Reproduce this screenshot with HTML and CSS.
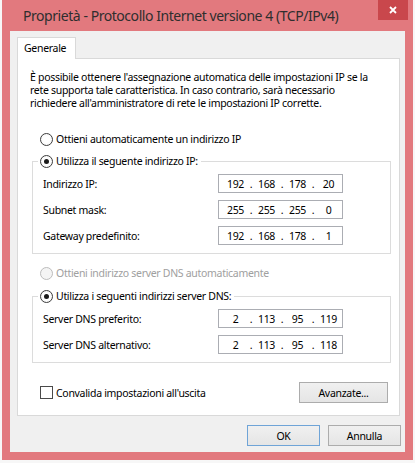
FILE: index.html
```html
<!DOCTYPE html>
<html lang="it">
<head>
  <meta charset="UTF-8" />
  <title>Proprietà - Protocollo Internet versione 4 (TCP/IPv4)</title>
  <link rel="stylesheet" href="styles.css">
</head>
<body>

  <!-- Dialog window with pink Windows 8 frame -->
  <div class="window">
    <div class="titlebar">
      <span class="title">Proprietà - Protocollo Internet versione 4 (TCP/IPv4)</span>
      <button class="close" aria-label="Chiudi">
        <svg width="8" height="8" viewBox="0 0 8 8">
          <path d="M1 1 L7 7 M7 1 L1 7" stroke="#fff" stroke-width="1.8" fill="none"/>
        </svg>
      </button>
    </div>

    <div class="client">
      <div class="tabs">
        <div class="tab">Generale</div>
      </div>

      <div class="panel">
        <p class="intro">
          È possibile ottenere l'assegnazione automatica delle impostazioni IP se la<br>
          rete supporta tale caratteristica. In caso contrario, sarà necessario<br>
          richiedere all'amministratore di rete le impostazioni IP corrette.
        </p>

        <label class="option first">
          <span class="radio"></span>Ottieni automaticamente un indirizzo IP
        </label>

        <fieldset class="group">
          <legend><label class="option"><span class="radio checked"></span>Utilizza il seguente indirizzo IP:</label></legend>
          <div class="field">
            <span>Indirizzo IP:</span>
            <div class="ip"><span>192</span><i>.</i><span>168</span><i>.</i><span>178</span><i>.</i><span>20</span></div>
          </div>
          <div class="field">
            <span>Subnet mask:</span>
            <div class="ip"><span>255</span><i>.</i><span>255</span><i>.</i><span>255</span><i>.</i><span>0</span></div>
          </div>
          <div class="field">
            <span>Gateway predefinito:</span>
            <div class="ip"><span>192</span><i>.</i><span>168</span><i>.</i><span>178</span><i>.</i><span>1</span></div>
          </div>
        </fieldset>

        <label class="option disabled dns-auto">
          <span class="radio"></span>Ottieni indirizzo server DNS automaticamente
        </label>

        <fieldset class="group dns">
          <legend><label class="option"><span class="radio checked"></span>Utilizza i seguenti indirizzi server DNS:</label></legend>
          <div class="field">
            <span>Server DNS preferito:</span>
            <div class="ip"><span>2</span><i>.</i><span>113</span><i>.</i><span>95</span><i>.</i><span>119</span></div>
          </div>
          <div class="field">
            <span>Server DNS alternativo:</span>
            <div class="ip"><span>2</span><i>.</i><span>113</span><i>.</i><span>95</span><i>.</i><span>118</span></div>
          </div>
        </fieldset>

        <div class="panel-foot">
          <label class="option">
            <span class="check"></span>Convalida impostazioni all'uscita
          </label>
          <button class="btn advanced">Avanzate...</button>
        </div>
      </div>

      <div class="dialog-buttons">
        <button class="btn default">OK</button>
        <button class="btn">Annulla</button>
      </div>
    </div>
  </div>

</body>
</html>
```

FILE: styles.css
```css
/* Base */
* { box-sizing: border-box; }
body {
  margin: 0;
  background: #f7f7f7;
  font-family: "Noto Sans", sans-serif;
  font-size: 10.5px;
  letter-spacing: -0.3px;
  color: #000;
}

/* Window frame */
.window {
  margin-left: 2px;
  width: 411px;
  height: 460px;
  background: #e2797e;
  padding: 0 8px 8px 8px;
  display: flex;
  flex-direction: column;
}

.titlebar {
  height: 31px;
  display: flex;
  justify-content: space-between;
  align-items: flex-start;
}

.title {
  padding-left: 13px;
  line-height: 31px;
  font-size: 14px;
  letter-spacing: -0.45px;
  color: #2e2e2e;
  white-space: nowrap;
}

.close {
  width: 30px;
  height: 20px;
  margin-right: -3px;
  border: none;
  padding: 0;
  background: #c9474c;
  display: flex;
  align-items: center;
  justify-content: center;
}

/* Client area */
.client {
  flex: 1;
  background: #f0f0f0;
  padding: 6px 5px 0 7px;
}

.tabs {
  display: flex;
}

.tab {
  position: relative;
  z-index: 1;
  width: 59px;
  height: 22px;
  margin-bottom: -1px;
  padding-left: 6px;
  line-height: 21px;
  background: #fff;
  border: 1px solid #d9d9d9;
  border-bottom: none;
}

.panel {
  background: #fff;
  border: 1px solid #d9d9d9;
  padding: 12px 10px 12px 12px;
}

.intro {
  margin: 0;
  line-height: 13px;
  white-space: nowrap;
}

/* Radio and check options */
.option {
  display: flex;
  align-items: center;
  gap: 3px;
  height: 16px;
  white-space: nowrap;
}

.option.first {
  margin: 21px 0 0 10px;
}

.option.disabled {
  color: #a0a0a0;
}

.dns-auto {
  margin: 11px 0 0 10px;
}

.radio {
  width: 13px;
  height: 13px;
  border: 1px solid #3c3c3c;
  border-radius: 50%;
  background: radial-gradient(circle, #fff 40%, #f1f1f1 100%);
  display: flex;
  align-items: center;
  justify-content: center;
}

.radio.checked::after {
  content: "";
  width: 5px;
  height: 5px;
  border-radius: 50%;
  background: #1a1a1a;
}

.disabled .radio {
  border-color: #bcbcbc;
  background: #f4f4f4;
}

.check {
  width: 13px;
  height: 13px;
  border: 1px solid #4a4a4a;
  background: #fff;
}

/* Group boxes */
.group {
  margin: 6px -2px 0 2px;
  border: 1px solid #dcdcdc;
  padding: 5px 0 8px 10px;
  min-width: 0;
}

.group.dns {
  margin-top: 7px;
}

.group legend {
  margin-left: -5px;
  padding: 0 3px 0 2px;
}

.field {
  display: grid;
  grid-template-columns: 175px 125px;
  align-items: center;
  height: 19px;
  margin-bottom: 7px;
}

.field:last-child {
  margin-bottom: 0;
}

/* IP address boxes */
.ip {
  height: 19px;
  border: 1px solid #abadb3;
  display: flex;
  align-items: center;
  padding-left: 3px;
}

.ip span {
  width: 27px;
  text-align: center;
}

.ip i {
  font-style: normal;
  width: 4px;
  text-align: center;
}

/* Footer rows and buttons */
.panel-foot {
  margin-top: 19px;
  display: flex;
  justify-content: space-between;
  align-items: center;
  padding-left: 10px;
  margin-right: 1px;
}

.btn {
  font-family: inherit;
  font-size: 10.5px;
  letter-spacing: -0.3px;
  color: #000;
  height: 21px;
  width: 73px;
  padding: 0;
  border: 1px solid #acacac;
  background: linear-gradient(#f0f0f0, #e5e5e5);
}

.btn.advanced {
  width: 89px;
}

.btn.default {
  border-color: #6fa4d7;
}

.dialog-buttons {
  margin-top: 9px;
  margin-right: -1px;
  display: flex;
  justify-content: flex-end;
  gap: 8px;
}
```
